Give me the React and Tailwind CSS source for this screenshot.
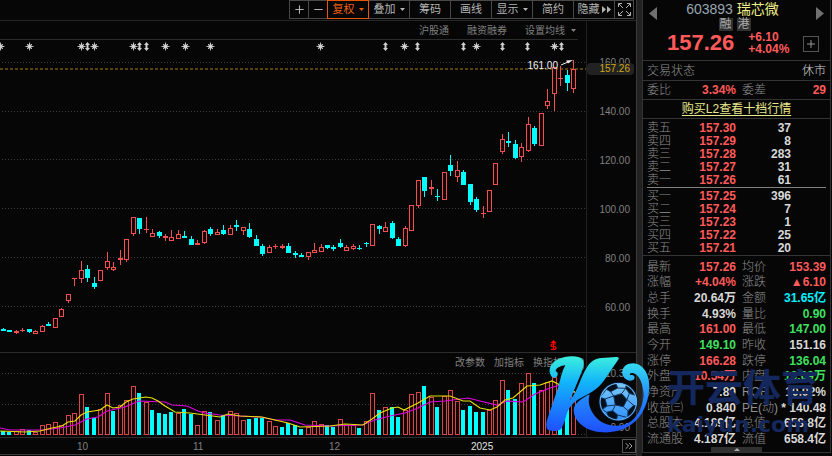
import React from "react";
import { Plus, Minus, ChevronsRight } from "lucide-react";

// [high, body top, body bottom, low, volume top, candle, volume bar]
// "u" = rising, "d" = falling
const BARS = [
  [328, 329, 331, 331, 431, "d", "d"],
  [330, 330, 332, 332, 432, "d", "d"],
  [330, 331, 333, 334, 431, "u", "u"],
  [328, 330, 331, 332, 429, "u", "u"],
  [329, 329, 332, 333, 430, "d", "d"],
  [330, 331, 334, 334, 432, "u", "u"],
  [325, 326, 332, 332, 425, "u", "u"],
  [322, 324, 326, 326, 424, "d", "u"],
  [318, 318, 328, 328, 422, "u", "u"],
  [308, 309, 317, 317, 425, "u", "u"],
  [294, 294, 301, 303, 415, "u", "u"],
  [278, 278, 279, 286, 413, "u", "u"],
  [261, 270, 279, 283, 394, "u", "u"],
  [265, 269, 278, 282, 407, "d", "d"],
  [277, 283, 287, 289, 418, "d", "d"],
  [270, 270, 281, 281, 409, "u", "u"],
  [252, 261, 268, 270, 393, "u", "u"],
  [262, 267, 270, 271, 411, "u", "d"],
  [250, 258, 260, 265, 405, "u", "u"],
  [239, 239, 260, 262, 400, "u", "u"],
  [217, 217, 234, 236, 386, "u", "u"],
  [218, 218, 229, 234, 393, "d", "d"],
  [217, 229, 230, 233, 402, "u", "u"],
  [229, 233, 237, 237, 410, "u", "d"],
  [231, 232, 236, 238, 413, "d", "d"],
  [234, 236, 238, 241, 414, "u", "d"],
  [230, 237, 241, 241, 412, "u", "d"],
  [230, 234, 239, 239, 413, "u", "u"],
  [231, 236, 238, 238, 409, "d", "d"],
  [236, 239, 245, 245, 414, "d", "d"],
  [240, 243, 245, 245, 425, "u", "u"],
  [230, 231, 243, 244, 411, "u", "u"],
  [227, 229, 234, 236, 412, "d", "d"],
  [229, 232, 235, 235, 420, "u", "u"],
  [225, 230, 234, 235, 415, "d", "d"],
  [225, 228, 235, 235, 411, "u", "u"],
  [220, 225, 227, 231, 413, "d", "u"],
  [227, 227, 231, 235, 420, "u", "u"],
  [223, 229, 237, 238, 419, "d", "d"],
  [235, 239, 246, 246, 418, "d", "d"],
  [244, 246, 254, 256, 418, "d", "d"],
  [245, 247, 253, 253, 421, "u", "u"],
  [244, 246, 247, 249, 426, "u", "u"],
  [244, 246, 248, 249, 427, "u", "d"],
  [243, 246, 253, 253, 423, "d", "d"],
  [251, 253, 255, 258, 425, "d", "d"],
  [253, 255, 257, 257, 429, "d", "d"],
  [252, 252, 257, 260, 427, "u", "u"],
  [243, 250, 253, 253, 421, "u", "u"],
  [244, 247, 252, 252, 424, "u", "u"],
  [245, 245, 248, 249, 425, "d", "d"],
  [245, 247, 249, 251, 427, "d", "d"],
  [239, 243, 247, 248, 419, "d", "u"],
  [245, 247, 251, 251, 425, "u", "u"],
  [244, 246, 249, 250, 425, "u", "u"],
  [245, 248, 249, 250, 428, "d", "d"],
  [242, 243, 244, 247, 421, "d", "u"],
  [224, 224, 246, 246, 393, "u", "u"],
  [225, 226, 229, 234, 410, "d", "d"],
  [222, 227, 232, 232, 407, "u", "u"],
  [221, 223, 238, 239, 407, "d", "d"],
  [237, 239, 246, 246, 417, "d", "d"],
  [226, 228, 246, 247, 410, "u", "u"],
  [205, 205, 231, 231, 394, "u", "u"],
  [180, 180, 206, 208, 392, "u", "u"],
  [177, 177, 191, 197, 386, "d", "d"],
  [180, 187, 189, 195, 397, "u", "u"],
  [189, 196, 197, 201, 407, "d", "d"],
  [172, 172, 200, 200, 396, "u", "u"],
  [155, 165, 171, 176, 390, "d", "u"],
  [161, 170, 177, 182, 401, "u", "u"],
  [170, 172, 185, 185, 410, "d", "d"],
  [184, 184, 202, 205, 406, "d", "d"],
  [197, 199, 210, 212, 412, "d", "d"],
  [206, 213, 214, 218, 412, "u", "d"],
  [190, 190, 212, 212, 410, "u", "u"],
  [163, 163, 185, 185, 400, "u", "u"],
  [134, 139, 152, 154, 380, "u", "u"],
  [132, 141, 143, 147, 390, "d", "d"],
  [140, 144, 158, 159, 399, "d", "d"],
  [143, 147, 157, 162, 383, "u", "u"],
  [117, 124, 151, 152, 373, "u", "u"],
  [126, 128, 144, 146, 383, "d", "d"],
  [113, 113, 146, 146, 390, "u", "u"],
  [89, 101, 106, 109, 382, "u", "u"],
  [67, 67, 94, 111, 377, "u", "u"],
  [66, 78, 79, 86, 391, "u", "d"],
  [70, 75, 83, 91, 395, "d", "d"],
  [60, 69, 89, 93, 392, "u", "u"],
];

const barX = (i) => Math.round(3 + i * 6.48);

const MA_SHORT =
  "0,431 25,432 40,431 52,428 62,426 68,422 75,421 81,415 87,412 100,410 107,405 113,408 120,407 126,402 133,399 146,397 152,398 158,401 165,406 175,412 190,413 205,415 220,417 228,414 240,416 262,417 275,420 288,423 300,427 330,426 345,424 363,425 372,419 380,413 392,408 398,407 404,410 418,403 430,396 450,396 463,401 470,401 480,408 490,410 497,407 505,400 513,398 527,386 540,385 552,381 560,385 575,392";
const MA_LONG =
  "0,428 10,430 42,430 60,428 75,425 87,419 98,417 107,411 125,407 139,401 165,402 172,405 187,406 198,411 205,413 220,415 240,416 260,417 275,420 290,420 305,425 330,426 362,425 375,420 390,416 405,413 418,408 430,402 445,401 468,398 480,401 497,405 507,401 523,402 535,394 550,388 560,385 575,387";

const STARS = [0, 29, 81, 94, 133, 165, 185, 210, 320, 404, 476, 554];
const ARROWS = [87, 139, 146, 385, 417, 463, 502, 527, 561];

const RED = "text-[#ff5a5a]";
const GREEN = "text-[#3fe060]";
const WHITE = "text-[#d8d8d8]";
const CYAN = "text-[#00f0ff]";

const ASKS = [
  ["卖五", "157.30", "37"],
  ["卖四", "157.29", "8"],
  ["卖三", "157.28", "283"],
  ["卖二", "157.27", "31"],
  ["卖一", "157.26", "61"],
];

const BIDS = [
  ["买一", "157.25", "396"],
  ["买二", "157.24", "7"],
  ["买三", "157.23", "1"],
  ["买四", "157.22", "25"],
  ["买五", "157.21", "20"],
];

const STATS = [
  ["最新", "157.26", RED, "均价", "153.39", RED],
  ["涨幅", "+4.04%", RED, "涨跌", "▲6.10", RED],
  ["总手", "20.64万", WHITE, "金额", "31.65亿", CYAN],
  ["换手", "4.93%", WHITE, "量比", "0.90", GREEN],
  ["最高", "161.00", RED, "最低", "147.00", GREEN],
  ["今开", "149.10", GREEN, "昨收", "151.16", WHITE],
  ["涨停", "166.28", RED, "跌停", "136.04", GREEN],
  ["外盘", "10.54万", RED, "内盘", "10.09万", GREEN],
  ["净资产", "7.89", WHITE, "ROE", "10.92%", WHITE],
  ["收益㈢", "0.840", WHITE, "PE(动)", "* 140.48", WHITE],
  ["总股本", "4.189亿", WHITE, "总值", "658.8亿", WHITE],
  ["流通股", "4.187亿", WHITE, "流值", "658.4亿", WHITE],
];

const Caret = () => (
  <svg width="5" height="3" viewBox="0 0 5 3" className="shrink-0" fill="currentColor">
    <path d="M0 0h5L2.5 3z" />
  </svg>
);

const ToolButton = ({ children, active, label, narrow }) => (
  <button
    type="button"
    aria-label={label}
    className={`-ml-px flex h-[19px] items-center justify-center gap-1 border text-[11px] leading-none ${
      narrow ? "w-5" : "w-[42px]"
    } ${
      active
        ? "relative border-[#e8560c] text-[#f0600f]"
        : "border-[#484848] text-[#b4b4b4]"
    }`}
  >
    {children}
  </button>
);

const Toolbar = () => (
  <div className="flex h-[21px] items-start justify-end border-b border-[#262626] pr-0.5">
    <ToolButton narrow label="放大">
      <Plus size={13} strokeWidth={2} />
    </ToolButton>
    <ToolButton narrow label="缩小">
      <Minus size={13} strokeWidth={2} />
    </ToolButton>
    <ToolButton active>
      复权 <Caret />
    </ToolButton>
    <ToolButton>
      叠加 <Caret />
    </ToolButton>
    <ToolButton>筹码</ToolButton>
    <ToolButton>画线</ToolButton>
    <ToolButton>
      显示 <Caret />
    </ToolButton>
    <ToolButton>简约</ToolButton>
    <ToolButton>
      <span className="flex items-center gap-0.5">
        隐藏
        <svg width="9" height="7" viewBox="0 0 9 7" fill="currentColor">
          <path d="M0 0l4 3.5L0 7zM5 0l4 3.5L5 7z" />
        </svg>
      </span>
    </ToolButton>
    <ToolButton narrow label="全屏">
      <svg
        width="13"
        height="13"
        viewBox="0 0 13 13"
        fill="none"
        stroke="currentColor"
      >
        <path d="M.5 4V.5H4M9 .5h3.5V4M12.5 9v3.5H9M4 12.5H.5V9M1 1l4 4M12 1L8 5M12 12L8 8M1 12l4-4" />
      </svg>
    </ToolButton>
  </div>
);

const Grid = ({ lines }) =>
  lines.map((y) => (
    <line
      key={y}
      x1="2"
      x2="586"
      y1={y + 0.5}
      y2={y + 0.5}
      stroke="#3c3c3c"
      strokeDasharray="1 2"
    />
  ));

const Candle = ({ x, bar }) => {
  const [high, top, bottom, low, , dir] = bar;
  if (dir === "d") {
    return (
      <g fill="#00ffff">
        <rect x={x} y={high} width="1" height={Math.max(low - high, 1)} />
        <rect x={x - 2} y={top} width="5" height={Math.max(bottom - top, 1)} />
      </g>
    );
  }
  return (
    <g fill="#f05050">
      <rect x={x} y={high} width="1" height={top - high} />
      <rect x={x} y={bottom} width="1" height={low - bottom} />
      {bottom - top < 3 ? (
        <rect x={x - 2} y={top} width="5" height={bottom - top} />
      ) : (
        <rect
          x={x - 1.5}
          y={top + 0.5}
          width="4"
          height={bottom - top - 1}
          fill="#160505"
          stroke="#f05050"
        />
      )}
    </g>
  );
};

const PriceChart = () => (
  <div className="relative">
    <svg
      viewBox="0 40 586 312"
      preserveAspectRatio="none"
      className="block h-[312px] w-full"
    >
      {STARS.map((x) => (
        <g key={x} stroke="#d0d0d0">
          <circle cx={x + 0.5} cy="46.5" r="2.2" fill="#d0d0d0" stroke="none" />
          <path
            d={`M${x + 0.5} 42.5v8M${x - 3.5} 46.5h8M${x - 2} 44l5 5M${x + 3} 44l-5 5`}
            strokeWidth="0.9"
          />
        </g>
      ))}
      {ARROWS.map((x) => (
        <path
          key={x}
          d={`M${x + 0.5} 42l2.5 3h-1.5v3H${x + 3}l-2.5 3l-2.5-3h1.5v-3H${x - 2}z`}
          fill="#d0d0d0"
        />
      ))}
      <Grid lines={[62, 111, 159, 208, 257, 306]} />
      <line
        x1="0"
        x2="586"
        y1="69"
        y2="69"
        stroke="#a87f12"
        strokeDasharray="3 2"
      />
      {BARS.map((bar, i) => (
        <Candle key={i} x={barX(i)} bar={bar} />
      ))}
      <path d="M561 65l7-3" stroke="#eee" />
      <path d="M573 60l-7 0.5l2 3z" fill="#eee" />
      <path d="M550.5 343l3-3l3 3z" fill="#f00" />
      <path
        d="M556 344h-4l-1 1v.8l1 .7h3l1 .8v1l-1 1h-4M553.5 343v7"
        fill="none"
        stroke="#f00"
        strokeWidth="1.2"
      />
    </svg>
    <span className="absolute top-5 right-7 text-[10px] leading-[12px] text-[#eee]">
      161.00
    </span>
  </div>
);

const VolumeChart = () => (
  <svg
    viewBox="0 370 586 67"
    preserveAspectRatio="none"
    className="block h-[67px] w-full"
  >
    <Grid lines={[373, 404, 434]} />
    {BARS.map((bar, i) => {
      const x = barX(i);
      return bar[6] === "d" ? (
        <rect key={i} x={x - 2} y={bar[4]} width="4" height={435 - bar[4]} fill="#00ffff" />
      ) : (
        <rect
          key={i}
          x={x - 1.5}
          y={bar[4] + 0.5}
          width="4"
          height={434 - bar[4]}
          fill="#160505"
          stroke="#d84848"
        />
      );
    })}
    <polyline points={MA_LONG} fill="none" stroke="#e000e0" strokeWidth="1.2" />
    <polyline points={MA_SHORT} fill="none" stroke="#e6e000" strokeWidth="1.2" />
  </svg>
);

const ChartPanel = () => (
  <main className="relative min-w-0 flex-1">
    <Toolbar />
    <div className="flex border-b border-[#2c2c2c]">
      <div className="min-w-0 flex-1">
        <nav className="mr-2 flex h-[19px] items-center justify-end gap-[18px] border-b border-[#2c2c2c] pr-0.5 text-[10px] text-[#808080]">
          <a href="#hgt">沪股通</a>
          <a href="#rzrq">融资融券</a>
          <button type="button" className="flex items-center gap-1.5">
            设置均线 <Caret />
          </button>
        </nav>
        <PriceChart />
      </div>
      <div className="relative w-[50px] border-l border-[#222] pt-[17px] pr-1.5 text-right text-[10px] text-[#808080]">
        {["160.00", "140.00", "120.00", "100.00", "80.00", "60.00"].map((p) => (
          <div key={p} className="h-[49px] leading-[49px]">
            {p}
          </div>
        ))}
        <div className="absolute inset-x-0 top-[42px] mr-0.5 rounded-sm bg-[#222] pr-1 text-[10px] leading-[12px] text-[#d0a818]">
          157.26
        </div>
      </div>
    </div>
    <div className="flex border-b border-[#2c2c2c]">
      <div className="min-w-0 flex-1">
        <div className="flex h-[17px] items-end justify-end gap-[9px] pr-0.5 text-[10px] leading-[14px] text-[#808080]">
          <button type="button">改参数</button>
          <button type="button">加指标</button>
          <button type="button">换指标</button>
          <button
            type="button"
            aria-label="关闭"
            className="h-3 w-3 rounded-xs border border-[#555]"
          />
        </div>
        <VolumeChart />
      </div>
      <div className="flex w-[50px] flex-col justify-between border-l border-[#222] pt-3.5 pr-1.5 pb-0.5 text-right text-[10px] leading-[14px] text-[#808080]">
        <span>10.38</span>
        <span>5.20</span>
        <span>0.00</span>
      </div>
    </div>
    <div className="flex h-[17px] items-center border-b border-[#3a3a3a] text-[10px] text-[#808080]">
      <div className="grid flex-1 grid-cols-[77fr_116fr_136fr_142fr_115fr]">
        <span />
        <span>10</span>
        <span>11</span>
        <span>12</span>
        <span className="text-[#e4e4e4]">2025</span>
      </div>
      <div className="flex w-[50px] justify-end">
        <button
          type="button"
          aria-label="更多"
          className="flex h-[14px] w-[14px] items-center justify-center border border-[#555] text-[#aaa]"
        >
          <ChevronsRight size={12} strokeWidth={2} className="shrink-0" />
        </button>
      </div>
    </div>
    <Logo />
  </main>
);

const Logo = () => (
  <svg
    viewBox="0 0 360 318"
    className="pointer-events-none absolute -right-[18px] bottom-0.5 z-10 h-[106px] w-[120px]"
  >
    <defs>
      <linearGradient id="brand" x1="0" y1="0" x2="0" y2="1">
        <stop offset="0" stopColor="#3cf0dc" />
        <stop offset="0.35" stopColor="#12b4fa" />
        <stop offset="1" stopColor="#1f50ff" />
      </linearGradient>
      <linearGradient id="ring" x1="0" y1="0" x2="0" y2="1">
        <stop offset="0" stopColor="#35dcf0" />
        <stop offset="0.5" stopColor="#2288fa" />
        <stop offset="1" stopColor="#1f50ff" />
      </linearGradient>
      <linearGradient id="ball" x1="0" y1="0" x2="0" y2="1">
        <stop offset="0" stopColor="#7cc8f4" />
        <stop offset="1" stopColor="#3090ff" />
      </linearGradient>
      <clipPath id="ballClip">
        <circle cx="253" cy="161" r="53" />
      </clipPath>
    </defs>
    <path
      fill="url(#brand)"
      d="M52 85C40 66 50 45 72 34C92 24 118 22 136 28C152 34 152 50 143 72L108 157C132 128 138 91 158 59C171 38 184 32 202 30L246 27C254 27 257 30 252 36L211 96C192 124 165 137 139 151C118 162 103 180 97 202C92 222 87 235 81 243C68 251 50 251 40 244C34 233 38 220 44 202L73 116C80 94 82 73 94 52C79 53 65 60 65 70C74 72 73 87 62 89C58 89 54 88 52 85Z"
    />
    <path
      fill="url(#ring)"
      d="M167 139C158 168 172 199 198 219C222 236 264 240 291 220C316 201 330 166 328 133C326 104 315 81 299 76C291 73 285 77 288 82C302 77 306 91 297 96C283 103 266 91 265 75C264 55 280 46 298 46C323 47 341 70 345 101C349 139 337 179 315 208C289 240 251 255 207 253C156 252 120 221 119 187C119 166 143 151 167 139Z"
    />
    <circle cx="253" cy="161" r="59" fill="#071a38" />
    <circle cx="253" cy="161" r="55" fill="url(#ball)" stroke="#68bdff" strokeWidth="3" />
    <g clipPath="url(#ballClip)" fill="#06101c" stroke="#10345c" strokeWidth="3">
      <path d="M239 144L263 137L279 155L268 176L244 171Z" />
      <path d="M226 106L247 109L251 120L230 131L217 124Z" />
      <path d="M277 108L302 125L304 142L286 136L275 121Z" />
      <path d="M198 148L213 153L219 174L205 184L196 174Z" />
      <path d="M218 193L236 188L251 201L246 220L226 213Z" />
      <path d="M282 188L299 172L309 175L299 202L281 209Z" />
      <path
        fill="none"
        d="M239 144L230 131M263 137L275 121M251 120L275 121M279 155L286 136M279 155L299 172M268 176L282 188M244 171L236 188M244 171L219 174M239 144L213 153M217 124L198 148M251 201L281 209M205 184L218 193"
      />
    </g>
  </svg>
);

const BookTable = ({ rows }) => (
  <table className="w-full table-fixed">
    <tbody>
      {rows.map(([name, price, qty]) => (
        <tr key={name} className="h-[13px] text-right leading-[13px]">
          <th scope="row" className="w-[30px] text-left font-light text-[#909090]">
            {name}
          </th>
          <td className="w-[59px] font-bold text-[#ff5a5a]">{price}</td>
          <td className="pr-[35px] font-bold text-[#d8d8d8]">{qty}</td>
        </tr>
      ))}
    </tbody>
  </table>
);

const QuoteHeader = () => (
  <header className="flex h-[60px] justify-between px-1">
    <button type="button" aria-label="上一只" className="h-[27px] w-3 text-[#707070]">
      <svg width="8" height="13" viewBox="0 0 8 13" fill="currentColor" className="mx-auto">
        <path d="M8 0v13L0 6.5z" />
      </svg>
    </button>
    <div className="flex flex-1 flex-col items-center">
      <h1 className="flex gap-1 text-[14px] leading-[18px]">
        <span className="text-[#98a6b0]">603893</span>
        <span className="text-[#f0f08a]">瑞芯微</span>
      </h1>
      <div className="flex gap-1 pl-1 text-[12px] leading-[13px] text-[#aaa]">
        <span className="w-[14px] bg-[#303030] text-center">融</span>
        <span className="w-[14px] bg-[#303030] text-center">港</span>
      </div>
      <div className="flex w-full items-center pl-2 font-bold text-[#ff5a5a]">
        <span className="text-[22px] leading-[24px]">157.26</span>
        <span className="ml-[14px] text-[12px] leading-[12px]">
          +6.10
          <br />
          +4.04%
        </span>
      </div>
    </div>
    <div className="flex w-5 flex-col items-end justify-between pb-2">
      <button type="button" aria-label="下一只" className="h-[27px] w-3 text-[#707070]">
        <svg width="8" height="13" viewBox="0 0 8 13" fill="currentColor" className="mx-auto">
          <path d="M0 0v13l8-6.5z" />
        </svg>
      </button>
      <button
        type="button"
        aria-label="加自选"
        className="mr-[7px] flex h-4 w-4 items-center justify-center border border-[#555] text-[#999]"
      >
        <Plus size={12} strokeWidth={2} className="shrink-0" />
      </button>
    </div>
  </header>
);

const Stat = ({ name, value, color }) => (
  <div className="flex items-center justify-between leading-none whitespace-nowrap">
    <dt className="font-light text-[#909090]">{name}</dt>
    <dd className={`font-bold ${color}`}>{value}</dd>
  </div>
);

const QuotePanel = () => (
  <aside className="mr-px mb-[3px] flex w-[189px] shrink-0 flex-col border-x border-[#333] text-[12px]">
    <QuoteHeader />
    <div className="flex h-5 items-center justify-between border-t border-[#333] px-1 font-light text-[#909090]">
      <span>交易状态</span>
      <span className="text-[#d8d8d8]">休市</span>
    </div>
    <div className="flex h-[19px] items-center border-t border-[#333] px-1 text-[#909090]">
      <span className="font-light">委比</span>
      <span className="w-[65px] text-right font-bold text-[#ff5a5a]">3.34%</span>
      <span className="ml-1.5 font-light">委差</span>
      <span className="flex-1 text-right font-bold text-[#ff5a5a]">29</span>
    </div>
    <div className="flex h-5 items-center justify-center border-y border-[#333]">
      <a href="#level2" className="leading-none text-[#e8e88a] underline underline-offset-2">
        购买L2查看十档行情
      </a>
    </div>
    <div className="px-1 pt-[3px]">
      <BookTable rows={ASKS} />
      <hr className="mb-0.5 border-[#808080]" />
      <BookTable rows={BIDS} />
    </div>
    <div className="relative flex flex-1 flex-col border-y border-[#333] px-1 pt-[3px]">
      <dl className="grid flex-1 auto-rows-fr grid-cols-[89fr_84fr] gap-x-1.5">
        {STATS.map(([nameA, valA, colA, nameB, valB, colB]) => (
          <React.Fragment key={nameA}>
            <Stat name={nameA} value={valA} color={colA} />
            <Stat name={nameB} value={valB} color={colB} />
          </React.Fragment>
        ))}
      </dl>
      <button
        type="button"
        aria-label="收起"
        className="mx-auto flex h-[5px] w-[51px] items-center justify-center bg-[#303030] text-[#aaa]"
      >
        <svg width="6" height="3" viewBox="0 0 6 3" fill="currentColor">
          <path d="M3 0l3 3H0z" />
        </svg>
      </button>
      <div className="pointer-events-none absolute bottom-[11px] left-6 font-bold whitespace-nowrap text-[#14285e]">
        <div className="text-[38px] leading-[42px]">开云体育</div>
        <div className="font-['DejaVu_Sans'] text-[22px] leading-[32px]">kaiyun.com</div>
      </div>
    </div>
  </aside>
);

export default function App() {
  return (
    <div className="flex min-h-screen bg-[#060606] font-['Liberation_Sans','Noto_Sans_CJK_SC',sans-serif]">
      <ChartPanel />
      <div className="w-1.5 shrink-0 border-l border-[#3a3a3a] bg-[#222]" />
      <QuotePanel />
    </div>
  );
}
